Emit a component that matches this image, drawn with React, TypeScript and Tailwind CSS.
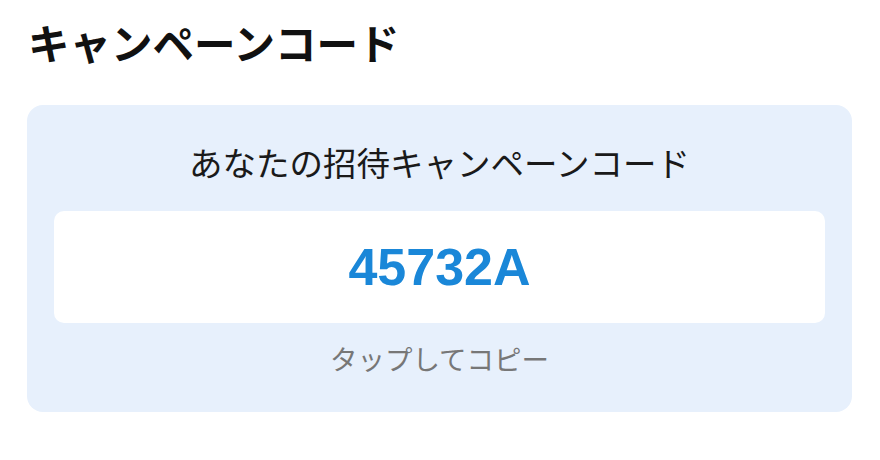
export default function App() {
  return (
    <div className="w-[880px] h-[460px] bg-white pt-[18px] px-[27px]" style={{ fontFamily: '"Noto Sans CJK JP", "Noto Sans", sans-serif' }}>
      <h1 className="pl-[1px] text-[41.5px] leading-[48px] font-bold text-[#111111]">キャンペーンコード</h1>
      <div className="mt-[39px] w-[825px] h-[307px] rounded-[16px] bg-[#e7f0fc] px-[27px] pt-[37px] flex flex-col items-center">
        <div className="text-[33.5px] leading-[40px] text-[#1a1a1a]">あなたの招待キャンペーンコード</div>
        <div className="mt-[29px] w-full h-[112px] rounded-[10px] bg-white flex items-center justify-center">
          <span className="text-[52px] font-bold text-[#1a87d8]" style={{ fontFamily: '"Liberation Sans", Arial, sans-serif' }}>45732A</span>
        </div>
        <div className="mt-[17px] text-[27.5px] leading-[36px] text-[#777777]">タップしてコピー</div>
      </div>
    </div>
  );
}
